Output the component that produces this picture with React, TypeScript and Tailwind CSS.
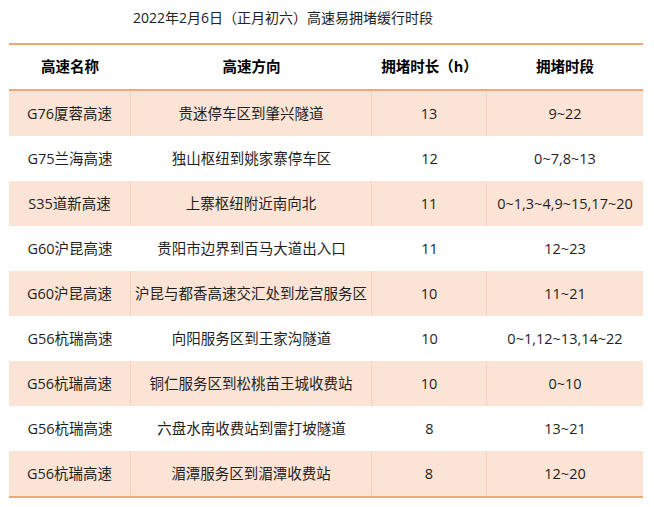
import React from 'react';

const rows = [
  ['G76厦蓉高速', '贵迷停车区到肇兴隧道', '13', '9~22'],
  ['G75兰海高速', '独山枢纽到姚家寨停车区', '12', '0~7,8~13'],
  ['S35道新高速', '上寨枢纽附近南向北', '11', '0~1,3~4,9~15,17~20'],
  ['G60沪昆高速', '贵阳市边界到百马大道出入口', '11', '12~23'],
  ['G60沪昆高速', '沪昆与都香高速交汇处到龙宫服务区', '10', '11~21'],
  ['G56杭瑞高速', '向阳服务区到王家沟隧道', '10', '0~1,12~13,14~22'],
  ['G56杭瑞高速', '铜仁服务区到松桃苗王城收费站', '10', '0~10'],
  ['G56杭瑞高速', '六盘水南收费站到雷打坡隧道', '8', '13~21'],
  ['G56杭瑞高速', '湄潭服务区到湄潭收费站', '8', '12~20'],
];

const cols = 'grid grid-cols-[122px_241px_115px_156px]';

export default function App() {
  return (
    <div
      className="w-[654px] h-[507px] bg-white text-[#1f1f1f]"
      style={{ fontFamily: '"Open Sans", "Noto Sans CJK SC", sans-serif' }}
    >
      {/* Title */}
      <div className="h-[43px] pt-[8px] pl-[133px] text-[14px] leading-[20px] text-[#222]">
        2022年2月6日（正月初六）高速易拥堵缓行时段
      </div>

      {/* Table */}
      <div className="ml-[9px] w-[634px] border-t-2 border-b-2 border-[#f2a874]">
        <div className={`${cols} h-[46px] items-center text-center text-[14.5px] font-bold text-black border-b-2 border-[#f2a874]`}>
          <div>高速名称</div>
          <div>高速方向</div>
          <div>拥堵时长（h）</div>
          <div>拥堵时段</div>
        </div>
        {rows.map((r, i) => {
          const striped = i % 2 === 0;
          return (
            <div
              key={i}
              className={`${cols} h-[45px] text-center text-[14.5px] ${striped ? 'bg-[#fbe4d5]' : 'bg-white'}`}
            >
              {r.map((c, j) => (
                <div
                  key={j}
                  className={`flex items-center justify-center ${
                    j < 3 && striped ? 'border-r border-[#f6d2ba]' : ''
                  }`}
                >
                  {c}
                </div>
              ))}
            </div>
          );
        })}
      </div>
    </div>
  );
}
